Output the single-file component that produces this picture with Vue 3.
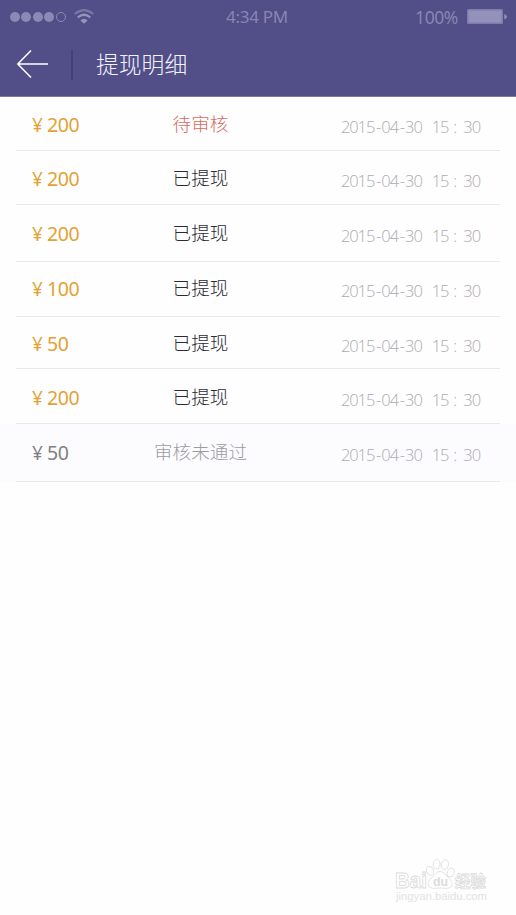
<template>
  <div class="page">
    <header class="header">
      <div class="status-bar">
        <div class="signal">
          <i v-for="n in 5" :key="n" class="dot" :class="{ hollow: n === 5 }"></i>
          <svg class="wifi" width="20" height="15" viewBox="0 0 20 15">
            <path d="M0.8 5 Q10 -2.6 19.2 5" fill="none" stroke="currentColor" stroke-width="2.2" opacity="0.6" />
            <path d="M3.8 8.4 Q10 3 16.2 8.4" fill="none" stroke="currentColor" stroke-width="2.3" />
            <path d="M6.4 11.4 Q10 8 13.6 11.4 L10 14.8 Z" fill="currentColor" />
          </svg>
        </div>
        <span class="clock">4:34 PM</span>
        <div class="battery">
          <span class="percent">100%</span>
          <svg width="42" height="18" viewBox="0 0 42 18">
            <rect x="1" y="1" width="36" height="15" rx="1.5" fill="#7f7bac" />
            <rect x="2.5" y="2.5" width="33" height="12" fill="#9491ba" />
            <path d="M38.3 6 Q41 7 41 8.7 Q41 10.4 38.3 11.4 Z" fill="#9491ba" />
          </svg>
        </div>
      </div>
      <div class="nav">
        <svg class="back" width="34" height="30" viewBox="0 0 34 30">
          <path d="M15 1.5 L1.8 15 L15 28.5 M1.8 15 H32" fill="none" stroke="#fff" stroke-width="1.5" />
        </svg>
        <i class="divider"></i>
        <h1>提现明细</h1>
      </div>
    </header>

    <ul class="list">
      <li
        v-for="(item, i) in records"
        :key="i"
        class="record"
        :class="item.type"
        :style="{ height: item.height + 'px', paddingTop: item.top + 'px' }"
      >
        <span class="amount"><b>¥</b>{{ item.amount }}</span>
        <span class="state">{{ labels[item.type] }}</span>
        <span class="time">
          <span>2015<i>-</i>04<i>-</i>30</span>
          <span class="hour">15</span>
          <span class="colon">:</span>
          <span>30</span>
        </span>
      </li>
    </ul>

    <svg class="watermark" width="100" height="50" viewBox="0 0 100 50">
      <g fill="#fff" stroke="#dcdcdc" stroke-width="0.8">
        <text class="brand" x="2" y="29.3" textLength="32" lengthAdjust="spacingAndGlyphs">Bai</text>
        <ellipse cx="37" cy="11.9" rx="3.4" ry="4.6" transform="rotate(-18 37 11.9)" />
        <ellipse cx="43.6" cy="5.4" rx="3.5" ry="4.8" />
        <ellipse cx="52" cy="5.6" rx="3.5" ry="4.8" transform="rotate(12 52 5.6)" />
        <ellipse cx="57.7" cy="13.5" rx="3.3" ry="4.6" transform="rotate(20 57.7 13.5)" />
        <path d="M47 12.5 C51 12.5 52 15.5 54.5 18 C58 21 60.5 24 58.5 27 C56 30.5 51 29 47 29 C43 29 38 30.5 36 27 C34 24 36 21 39.5 18 C42.5 15.5 43 12.5 47 12.5 Z" />
        <text class="cn" x="62" y="28.3" textLength="31" lengthAdjust="spacingAndGlyphs">经验</text>
      </g>
      <text class="du" x="40" y="27" textLength="15" lengthAdjust="spacingAndGlyphs">du</text>
      <text class="site" x="3" y="41" textLength="91" lengthAdjust="spacingAndGlyphs">jingyan.baidu.com</text>
    </svg>
  </div>
</template>

<script setup>
const labels = {
  pending: "待审核",
  done: "已提现",
  failed: "审核未通过",
};

const records = [
  { amount: 200, type: "pending", height: 54, top: 13 },
  { amount: 200, type: "done", height: 54, top: 13 },
  { amount: 200, type: "done", height: 57, top: 14 },
  { amount: 100, type: "done", height: 55, top: 12 },
  { amount: 50, type: "done", height: 52, top: 12 },
  { amount: 200, type: "done", height: 55, top: 14 },
  { amount: 50, type: "failed", height: 58, top: 14 },
];
</script>

<style>
body { margin: 0; background: #fdfdfd; }
</style>

<style scoped>
* { box-sizing: border-box; }
.page { position: relative; height: 915px; overflow: hidden; background: #fefefe; font-family: "Open Sans", "Noto Sans CJK SC", sans-serif; }
.header { height: 97px; background: #524e87; border-bottom: 1px solid #7d799f; }
.status-bar { display: grid; grid-template-columns: 1fr auto 1fr; align-items: center; height: 33px; padding: 0 8px 0 10px; color: #8985b3; }
.signal { display: flex; align-items: center; gap: 1.4px; }
.dot { width: 10px; height: 10px; border-radius: 50%; background: #8c89b6; }
.dot.hollow { background: none; border: 1px solid #8c89b6; }
.wifi { margin-left: 7px; color: #9693bc; }
.clock { margin-right: 4px; font-family: "Noto Sans", sans-serif; font-size: 17px; letter-spacing: -0.3px; }
.battery { display: flex; justify-content: flex-end; align-items: center; gap: 8px; }
.percent { font-family: "Noto Sans", sans-serif; font-size: 17.5px; letter-spacing: -0.4px; }
.nav { display: flex; align-items: center; height: 62px; padding-left: 16px; }
.divider { width: 2px; height: 30px; margin: 2px 23px 0 21px; background: #454079; }
h1 { margin: 1px 0 0; font-size: 22.8px; font-weight: 300; line-height: 30px; color: #f4f2ff; }
.list { margin: 0; padding: 0; list-style: none; }
.record { display: grid; grid-template-columns: 100px 168px 1fr; align-items: start; margin: 0 16px; padding: 0 19px 0 16px; border-bottom: 1px solid #e9e8eb; line-height: 28px; }
.record.failed { margin: 0; padding: 0 35px 0 32px; background: linear-gradient(#e9e8eb, #e9e8eb) 16px bottom / 484px 1px no-repeat #fcfbfe; border: 0; }
.amount { margin-top: 1px; font-family: "Noto Sans", sans-serif; font-size: 19.5px; letter-spacing: -0.4px; color: #e3a233; }
.amount b { display: inline-block; width: 15px; font-weight: 400; font-size: 19px; }
.state { justify-self: center; margin-left: -31px; font-size: 18.6px; font-weight: 300; color: #2c2931; }
.pending .state { color: #d56c61; }
.failed .state { color: #9d9ba1; }
.failed .amount { color: #828084; }
.time { display: flex; justify-content: flex-end; margin-top: 3px; padding-right: 1px; font-size: 16.5px; font-weight: 300; letter-spacing: -1.1px; color: #adabb1; }
.time i { margin: 0 1.1px 0 1.8px; font-style: normal; }
.hour { margin-left: 10px; }
.colon { width: 15px; padding-left: 5px; }
.watermark { position: absolute; right: 23px; bottom: 6px; }
.brand { font: 700 21.5px "Liberation Sans", sans-serif; }
.du { font: 700 12px "Liberation Sans", sans-serif; fill: #dcdcdc; }
.cn { font: 700 16px "Noto Sans CJK SC", sans-serif; }
.site { font: 10px "Liberation Sans", sans-serif; fill: #e2e2e2; }
</style>
